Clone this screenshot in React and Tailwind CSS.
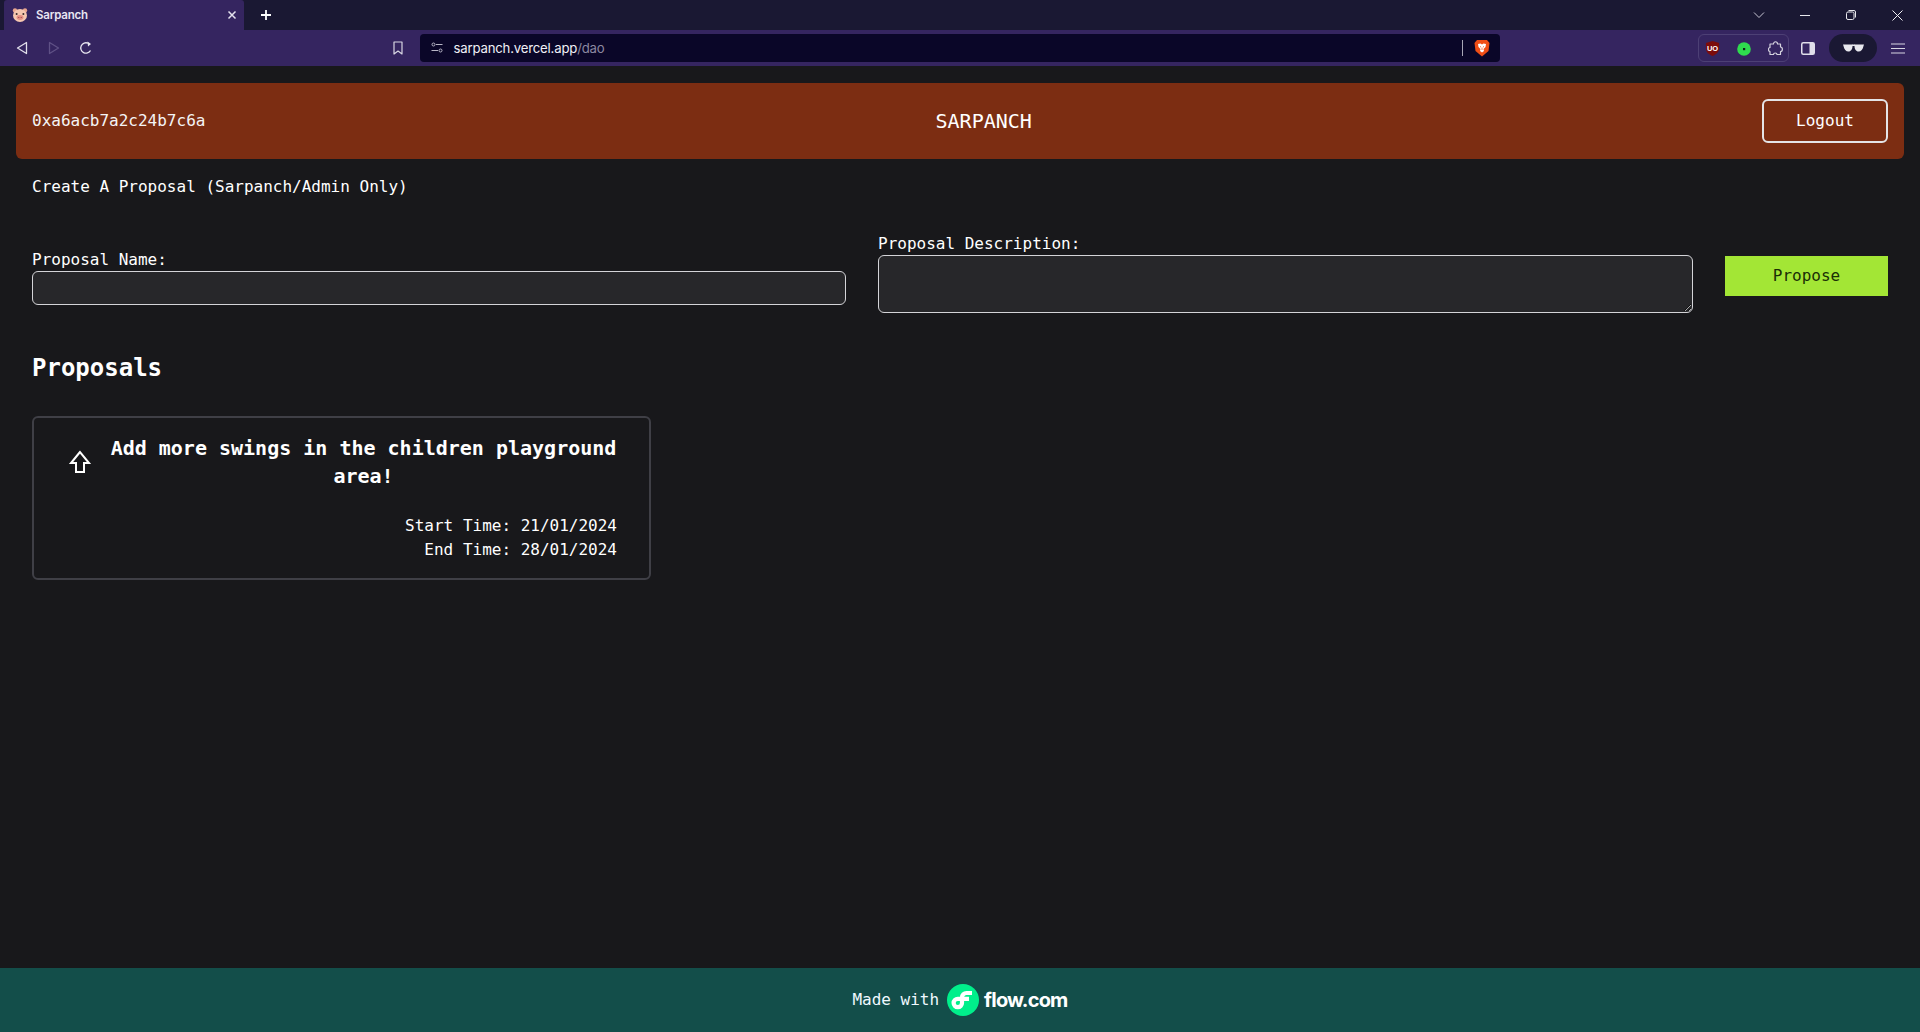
import React from "react";

const mono = "font-['DejaVu_Sans_Mono','Liberation_Mono',monospace]";

function Pig() {
  return (
    <svg width="16" height="16" viewBox="0 0 16 16">
      <circle cx="3" cy="3.5" r="2.2" fill="#e8a58f" />
      <circle cx="13" cy="3.5" r="2.2" fill="#e8a58f" />
      <ellipse cx="8" cy="8.5" rx="7" ry="6.5" fill="#f6c7b0" />
      <circle cx="4.6" cy="7" r="1" fill="#3a2a2a" />
      <circle cx="11.4" cy="7" r="1" fill="#3a2a2a" />
      <ellipse cx="8" cy="10.5" rx="3.4" ry="2.4" fill="#e58f83" />
      <circle cx="6.8" cy="10.5" r=".6" fill="#8a3f3f" />
      <circle cx="9.2" cy="10.5" r=".6" fill="#8a3f3f" />
    </svg>
  );
}

function BrowserBar() {
  return (
    <div className="flex flex-col font-['Inter',sans-serif]">
      <div className="h-[30px] bg-[#1a1833] flex items-stretch text-white">
        <div className="ml-[4px] w-[240px] bg-[#352560] rounded-t-[3px] flex items-center pl-[8px] pr-[7px]">
          <Pig />
          <span className="ml-[8px] pt-[1px] text-[11.5px] font-semibold text-[#e8e6f2] flex-1 tracking-[-0.2px]">Sarpanch</span>
          <svg width="10" height="10" viewBox="0 0 10 10" stroke="#e4e2ee" strokeWidth="1.5">
            <path d="M1.5 1.5l7 7M8.5 1.5l-7 7" />
          </svg>
        </div>
        <div className="ml-[16px] flex items-center">
          <svg width="12" height="12" viewBox="0 0 12 12" stroke="#fff" strokeWidth="1.8">
            <path d="M6 1v10M1 6h10" />
          </svg>
        </div>
        <div className="ml-auto flex items-center">
          <div className="w-[46px] flex justify-center">
            <svg width="12" height="8" viewBox="0 0 12 8" fill="none" stroke="#c8c6d4">
              <path d="M1 1.5l5 5 5-5" />
            </svg>
          </div>
          <div className="w-[46px] flex justify-center">
            <svg width="10" height="10" viewBox="0 0 10 10" stroke="#e8e8ee"><path d="M0 5.5h10" /></svg>
          </div>
          <div className="w-[46px] flex justify-center">
            <svg width="10" height="10" viewBox="0 0 10 10" fill="none" stroke="#e8e8ee">
              <rect x=".5" y="2" width="7.5" height="7.5" rx="1.5" />
              <path d="M2.5 .5h5.5a1.5 1.5 0 0 1 1.5 1.5v5.5" />
            </svg>
          </div>
          <div className="w-[46px] flex justify-center">
            <svg width="11" height="11" viewBox="0 0 11 11" stroke="#f0f0f4"><path d="M.5.5l10 10M10.500.5l-10 10" /></svg>
          </div>
        </div>
      </div>
      <div className="h-[36px] bg-[#352560] flex items-center relative">
        <div className="ml-[13px] w-[18px] flex justify-center">
          <svg width="12" height="14" viewBox="0 0 12 14" fill="none" stroke="#e2e0ec" strokeWidth="1.3" strokeLinejoin="round">
            <path d="M10.500 1.500v11L1.500 7z" />
          </svg>
        </div>
        <div className="ml-[14px] w-[18px] flex justify-center">
          <svg width="12" height="14" viewBox="0 0 12 14" fill="none" stroke="#5f5186" strokeWidth="1.3" strokeLinejoin="round">
            <path d="M1.500 1.500v11L10.500 7z" />
          </svg>
        </div>
        <div className="ml-[14px] w-[18px] flex justify-center">
          <svg width="14" height="14" viewBox="0 0 14 14" fill="none" stroke="#e8e6f0" strokeWidth="1.3">
            <path d="M11.500 9.500A5.200 5.200 0 1 1 9 2.200" />
            <path d="M8.500 .5l3.500 2.500-3 2.500z" fill="#e8e6f0" stroke="none" />
          </svg>
        </div>
        <div className="ml-[296px] w-[14px] flex justify-center">
          <svg width="10" height="14" viewBox="0 0 10 14" fill="none" stroke="#d8d6e2" strokeWidth="1.2" strokeLinejoin="round">
            <path d="M1 1h8v12L5 10 1 13z" />
          </svg>
        </div>
        <div className="ml-[15px] w-[1080px] h-[28px] rounded-[4px] bg-[#0a0628] flex items-center pl-[11px]">
          <svg width="12" height="12" viewBox="0 0 12 12" fill="none" stroke="#b8b6c6">
            <circle cx="2.500" cy="2.500" r="1.500" />
            <path d="M5 2.500h6.500M.5 8.500H7" />
            <circle cx="9.500" cy="8.500" r="1.500" />
          </svg>
          <span className="ml-[10.500px] pt-[1px] text-[13.200px] tracking-[-0.2px] text-[#f0eff6]">
            sarpanch.vercel.app<span className="text-[#8b88a0]">/dao</span>
          </span>
          <div className="ml-auto w-px h-[16px] bg-[#a8a6b6]" />
          <div className="ml-[11px] mr-[10px] flex">
            <svg width="16" height="18" viewBox="0 0 16 18">
              <path d="M3 1h10l2.500 3-1 8L8 17.500 1.500 12l-1-8z" fill="#f04e16" />
              <path d="M4 5l2.500-.5L8 5.500l1.500-1L12 5l-.5 3L9.500 10l.5 2-2 1.500L6 12l.5-2-2-2z" fill="#fff" />
              <path d="M6 7.500l1 .5M10 7.500l-1 .5M8 8.500v2.500" stroke="#f04e16" strokeWidth=".8" />
            </svg>
          </div>
        </div>
        <div className="ml-[198px] w-[91px] h-[28px] rounded-[6px] border border-[#4d4075] flex items-center relative">
          <svg className="absolute left-[6px] top-[5px]" width="15" height="17" viewBox="0 0 16 17">
            <path d="M8 .5l7 2v6c0 4-3.500 6.500-7 8-3.500-1.500-7-4-7-8v-6z" fill="#7c0c0c" />
            <text x="8" y="11" textAnchor="middle" fontSize="8" fontWeight="700" fill="#fff" fontFamily="Liberation Sans">UO</text>
          </svg>
          <svg className="absolute left-[38px] top-[7px]" width="14" height="14" viewBox="0 0 14 14">
            <circle cx="7" cy="7" r="6.800" fill="#2fdc4e" />
            <rect x="6" y="6" width="2.200" height="2.200" fill="#10241a" />
          </svg>
          <svg className="absolute left-[69px] top-[6px]" width="15" height="15" viewBox="0 0 15 15" fill="none" stroke="#d4d2de" strokeWidth="1.2" strokeLinejoin="round">
            <path d="M5.500 3c0-3 4-3 4 0h3v3c2.500 0 2.500 4.500 0 4.500v3h-3.500c0-2-3.500-2-3.500 0H2v-3c-2 0-2-4 0-4V3z" />
          </svg>
        </div>
        <div className="ml-[12px] w-[14px] flex justify-center">
          <svg width="14" height="13" viewBox="0 0 14 13">
            <rect x=".75" y=".75" width="12.500" height="11.500" rx="1.500" fill="none" stroke="#e0deea" strokeWidth="1.500" />
            <rect x="8.500" y="1" width="4.500" height="11" fill="#e0deea" />
          </svg>
        </div>
        <div className="ml-[14px] w-[48px] h-[28px] rounded-full bg-[#1a1833] flex items-center justify-center">
          <svg width="21" height="8" viewBox="0 0 21 8" fill="#e8e8ee">
            <path d="M0 .5h9.500v1.500C9.500 5 8 7.500 5.500 7.500S1 5.500.5 2z" />
            <path d="M21 .5h-9.500v1.500c0 3 1.500 5.500 4 5.500s4.500-2 5-5.500z" />
            <rect x="9" y=".5" width="3" height="1.500" />
          </svg>
        </div>
        <div className="ml-[14px] w-[14px] flex justify-center">
          <svg width="14" height="11" viewBox="0 0 14 11" stroke="#d8d6e2" strokeWidth="1.2">
            <path d="M0 1h14M0 5.500h14M0 10h14" />
          </svg>
        </div>
      </div>
    </div>
  );
}

function FlowLogo() {
  return (
    <svg width="32" height="32" viewBox="0 0 32 32">
      <circle cx="16" cy="16" r="16" fill="#00ef8b" />
      <path d="M25 9h-5.500a4.500 4.500 0 0 0-4.500 4.500v5.500a4.200 4.200 0 1 1-4.200-4.200H22" fill="none" stroke="#fff" strokeWidth="4.200" />
    </svg>
  );
}

export default function App() {
  return (
    <div className={`h-[1032px] flex flex-col bg-[#18181b] text-white overflow-hidden ${mono}`}>
      <BrowserBar />
      <main className="flex-1 flex flex-col">
        <header className="mx-[16px] mt-[17px] h-[76px] rounded-[6px] bg-[#7c2d12] flex justify-between items-center px-[16px]">
          <div className="text-[16px] text-[#f4f4f5]">0xa6acb7a2c24b7c6a</div>
          <div className="text-center text-[20px]">SARPANCH</div>
          <button className="w-[126px] h-[44px] rounded-[6px] border-2 border-[#e4e4e7] text-[16px]">Logout</button>
        </header>
        <section className="px-[32px]">
          <p className="mt-[16px] text-[16px] leading-[24px]">Create A Proposal (Sarpanch/Admin Only)</p>
          <div className="mt-[35px] grid grid-cols-[814px_815px_1fr] gap-[32px] items-center">
            <label className="block mt-[8px]">
              <span className="block text-[16px] leading-[20px] mb-[1px]">Proposal Name:</span>
              <input className="block w-full h-[34px] rounded-[6px] border border-[#d4d4d8] bg-[#27272a]" />
            </label>
            <label className="block">
              <span className="block text-[16px] leading-[20px] mb-[1px]">Proposal Description:</span>
              <textarea className="block w-full h-[58px] rounded-[6px] border border-[#d4d4d8] bg-[#27272a]" />
            </label>
            <button className="mt-[4px] h-[40px] bg-[#a3e635] text-[#1a2e05] text-[16px]">Propose</button>
          </div>
          <h2 className="mt-[39px] text-[24px] leading-[32px] font-bold">Proposals</h2>
          <div className="mt-[32px] w-[619px] h-[164px] rounded-[6px] border-2 border-[#3f3f46] pt-[16px] pr-[32px] pl-[34px]">
            <div className="flex items-center">
              <svg className="w-[24px] h-[24px] shrink-0" viewBox="0 0 24 24" fill="none" stroke="#fff" strokeWidth="2" strokeLinejoin="miter">
                <path d="M12 2L3 13h5v9h8v-9h5z" />
              </svg>
              <div className="ml-[18px] flex-1 text-center text-[20px] leading-[28px] font-bold">Add more swings in the children playground area!</div>
            </div>
            <div className="mt-[24px] text-right text-[16px] leading-[24px]">
              <div>Start Time: 21/01/2024</div>
              <div>End Time: 28/01/2024</div>
            </div>
          </div>
        </section>
      </main>
      <footer className="h-[64px] bg-[#134e4a] flex items-center justify-center">
        <span className="text-[16px] text-[#f0f9ff] mr-[8px]">Made with</span>
        <FlowLogo />
        <span className="ml-[5px] font-['Inter',sans-serif] font-bold text-[20px] tracking-[-0.8px] text-white">flow.com</span>
      </footer>
    </div>
  );
}
